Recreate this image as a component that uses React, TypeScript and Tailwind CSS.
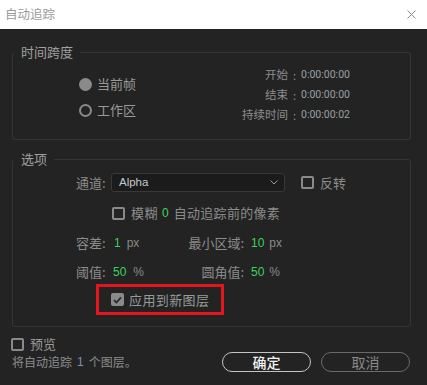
import React from "react";

const CJK = '"Noto Sans CJK SC", "Noto Sans", sans-serif';
const LAT = '"Liberation Sans", "Noto Sans CJK SC", sans-serif';

function Box({ checked = false }: { checked?: boolean }) {
  if (checked) {
    return (
      <span className="flex h-[13px] w-[13px] shrink-0 items-center justify-center rounded-[2px] bg-[#8a8a8a]">
        <svg width="9" height="8" viewBox="0 0 9 8">
          <path d="M1 4.2 L3.4 6.5 L8 1.3" fill="none" stroke="#2a2a2a" strokeWidth="1.8" />
        </svg>
      </span>
    );
  }
  return <span className="block h-[13px] w-[13px] shrink-0 rounded-[2px] border-2 border-[#8a8a8a]" />;
}

function Radio({ on = false }: { on?: boolean }) {
  return on ? (
    <span className="block h-[13px] w-[13px] shrink-0 rounded-full bg-[#8a8a8a]" />
  ) : (
    <span className="block h-[13px] w-[13px] shrink-0 rounded-full border-2 border-[#8a8a8a]" />
  );
}

export default function App() {
  return (
    <div className="flex h-[385px] w-[427px] flex-col overflow-hidden bg-[#232323]" style={{ fontFamily: CJK }}>
      {/* title bar */}
      <div className="flex h-[29px] shrink-0 items-center justify-between bg-white pl-[5px] pr-[11px]">
        <span className="text-[12.5px] leading-none text-[#9a9a9a]">自动追踪</span>
        <svg width="9" height="9" viewBox="0 0 9 9">
          <path d="M0.5 0.5 L8.5 8.5 M8.5 0.5 L0.5 8.5" stroke="#8a8a8a" strokeWidth="1" />
        </svg>
      </div>

      {/* group 1 */}
      <fieldset className="ml-[12px] mt-[15px] w-[399px] rounded-[3px] border border-[#363636] pb-[14px]">
        <legend className="ml-[1px] px-[7px] text-[13px] leading-[16px] text-[#a0a0a0]">时间跨度</legend>
        <div className="flex pl-[66px]">
          <div className="flex w-[151px] flex-col gap-[6px] pt-[14px] text-[13px] text-[#9a9a9a]">
            <div className="flex h-[20px] items-center gap-[5px]">
              <Radio on />
              <span>当前帧</span>
            </div>
            <div className="flex h-[20px] items-center gap-[5px]">
              <Radio />
              <span>工作区</span>
            </div>
          </div>
          <div className="grid grid-cols-[58px_13px_auto] pt-[5px] text-[#8c8c8c]">
            {[
              ["开始", "0:00:00:00"],
              ["结束", "0:00:00:00"],
              ["持续时间", "0:00:00:02"],
            ].map(([l, v]) => (
              <React.Fragment key={l}>
                <span className="flex h-[20px] items-center justify-end whitespace-nowrap text-[11.5px]">{l}</span>
                <span className="flex h-[20px] items-center justify-center text-[11px]">:</span>
                <span className="flex h-[20px] items-center text-[10.5px] text-[#9aa0a6]" style={{ fontFamily: '"Roboto", sans-serif' }}>
                  {v}
                </span>
              </React.Fragment>
            ))}
          </div>
        </div>
      </fieldset>

      {/* group 2 */}
      <fieldset className="ml-[12px] mt-[11px] w-[399px] rounded-[3px] border border-[#363636] pb-[11px]">
        <legend className="ml-[1px] px-[7px] text-[13px] leading-[16px] text-[#a0a0a0]">选项</legend>
        <div className="flex flex-col pl-[63px] text-[13px] text-[#8c8c8c]">
          {/* channel */}
          <div className="mt-[6px] flex h-[19px] items-center">
            <span className="w-[35px]">通道:</span>
            <div className="flex h-[19px] w-[174px] items-center justify-between rounded-[3px] border border-[#383838] bg-[#1b1b1b] pl-[7px] pr-[6px]">
              <span className="text-[11.5px] text-[#c4c8d0]" style={{ fontFamily: LAT }}>Alpha</span>
              <svg width="8" height="5" viewBox="0 0 8 5">
                <path d="M0.5 0.5 L4 4 L7.5 0.5" fill="none" stroke="#9a9a9a" strokeWidth="1" />
              </svg>
            </div>
            <span className="ml-[16px]"><Box /></span>
            <span className="ml-[6px]">反转</span>
          </div>
          {/* blur */}
          <div className="ml-[36px] mt-[11px] flex h-[20px] items-center">
            <Box />
            <span className="ml-[6px] tracking-[0.5px]">模糊</span>
            <span className="ml-[4px] text-[12px] text-[#3bd35a]" style={{ fontFamily: LAT }}>0</span>
            <span className="ml-[5px] tracking-[0.3px]">自动追踪前的像素</span>
          </div>
          {/* tolerance */}
          <div className="mt-[10px] flex h-[20px] items-center">
            <span className="w-[37px]">容差:</span>
            <span className="flex w-[50px] items-center" style={{ fontFamily: LAT }}>
              <span className="ml-[1px] text-[12px] text-[#3bd35a]">1</span>
              <span className="ml-[6px] text-[12px] text-[#8a8a8a]">px</span>
            </span>
            <span className="w-[81px] text-right">最小区域:</span>
            <span className="ml-[7px] flex items-center" style={{ fontFamily: LAT }}>
              <span className="text-[12px] text-[#3bd35a]">10</span>
              <span className="ml-[5px] text-[12px] text-[#8a8a8a]">px</span>
            </span>
          </div>
          {/* threshold */}
          <div className="mt-[9px] flex h-[20px] items-center">
            <span className="w-[37px]">阈值:</span>
            <span className="flex w-[50px] items-center" style={{ fontFamily: LAT }}>
              <span className="text-[12px] text-[#3bd35a]">50</span>
              <span className="ml-[7px] text-[12px] text-[#8a8a8a]">%</span>
            </span>
            <span className="w-[81px] text-right">圆角值:</span>
            <span className="ml-[7px] flex items-center" style={{ fontFamily: LAT }}>
              <span className="text-[12px] text-[#3bd35a]">50</span>
              <span className="ml-[5px] text-[12px] text-[#8a8a8a]">%</span>
            </span>
          </div>
          {/* apply to new layer */}
          <div className="ml-[20px] mt-[2px] flex h-[31px] w-[128px] items-center border-[3px] border-[#e3151d] pl-[12px]">
            <Box checked />
            <span className="ml-[5px] tracking-[0.4px] text-[#9a9a9a]">应用到新图层</span>
          </div>
        </div>
      </fieldset>

      {/* bottom */}
      <div className="ml-[11px] mt-[9px] flex h-[16px] items-center text-[13px] text-[#9a9a9a]">
        <Box />
        <span className="ml-[6px]">预览</span>
      </div>
      <div className="flex h-[20px] items-center justify-between pl-[12px] pr-[17px]">
        <span className="flex items-center text-[12px] text-[#8c8c8c]">
          将自动追踪
          <span className="mx-[5px] text-[12px] text-[#7d92bd]" style={{ fontFamily: LAT }}>1</span>
          个图层。
        </span>
        <div className="flex gap-[10px]">
          <button className="flex h-[20px] w-[89px] items-center justify-center rounded-full border-[1.5px] border-[#c4c4c4] text-[14px] font-medium text-[#f2f2f2]">
            确定
          </button>
          <button className="flex h-[20px] w-[89px] items-center justify-center rounded-full border-[1.5px] border-[#6a6a6a] text-[14px] text-[#8a8a8a]">
            取消
          </button>
        </div>
      </div>
    </div>
  );
}
